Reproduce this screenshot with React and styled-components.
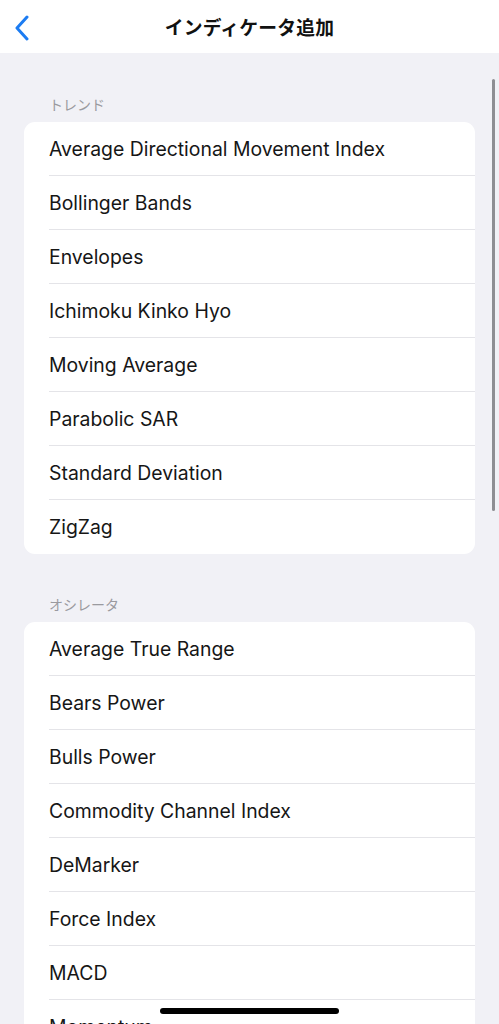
import styled, { createGlobalStyle } from "styled-components";

const GlobalStyle = createGlobalStyle`
  html, body {
    margin: 0;
    padding: 0;
    height: 100%;
    overflow: hidden;
    background: #f1f1f6;
  }
  body {
    font-family: Inter, "Noto Sans", "Noto Sans CJK JP", sans-serif;
    -webkit-font-smoothing: antialiased;
  }
`;

const sections = [
    {
        title: "トレンド",
        items: [
            "Average Directional Movement Index",
            "Bollinger Bands",
            "Envelopes",
            "Ichimoku Kinko Hyo",
            "Moving Average",
            "Parabolic SAR",
            "Standard Deviation",
            "ZigZag",
        ],
    },
    {
        title: "オシレータ",
        items: [
            "Average True Range",
            "Bears Power",
            "Bulls Power",
            "Commodity Channel Index",
            "DeMarker",
            "Force Index",
            "MACD",
            "Momentum",
        ],
    },
];

const App = () => {
    return (
        <Screen>
            <GlobalStyle />
            <Header>
                <BackButton aria-label="戻る">
                    <svg width="16" height="26" viewBox="0 0 16 26" fill="none">
                        <path
                            d="M13 2 L3 13 L13 24"
                            stroke="#1c7cf2"
                            strokeWidth="3"
                            strokeLinecap="round"
                            strokeLinejoin="round"
                        />
                    </svg>
                </BackButton>
                <Title>インディケータ追加</Title>
            </Header>
            <Content>
                {sections.map(section => (
                    <Section key={section.title}>
                        <SectionLabel>{section.title}</SectionLabel>
                        <Card>
                            {section.items.map(item => (
                                <Row key={item}>
                                    <RowText>{item}</RowText>
                                </Row>
                            ))}
                        </Card>
                    </Section>
                ))}
            </Content>
            <ScrollThumb />
            <HomeIndicator />
        </Screen>
    );
};

export default App;

const Screen = styled.div`
position: relative;
width: 499px;
height: 1024px;
overflow: hidden;
background: #f1f1f6;
`;

const Header = styled.header`
position: relative;
display: flex;
align-items: center;
justify-content: center;
height: 53px;
background: #ffffff;
`;

const BackButton = styled.button`
position: absolute;
left: 14px;
top: 15px;
padding: 0;
border: none;
background: none;
display: flex;
`;

const Title = styled.h1`
margin: 0;
font-family: "Noto Sans CJK JP", sans-serif;
font-size: 18.8px;
font-weight: 700;
color: #111111;
letter-spacing: 0.2px;
`;

const Content = styled.main`
display: flex;
flex-direction: column;
gap: 39px;
padding: 40px 24px 0 24px;
`;

const Section = styled.section`
display: flex;
flex-direction: column;
`;

const SectionLabel = styled.div`
padding-left: 25px;
height: 29px;
font-family: "Noto Sans CJK JP", sans-serif;
font-size: 14px;
color: #9a9a9f;
line-height: 22px;
`;

const Card = styled.div`
background: #ffffff;
border-radius: 11px;
overflow: hidden;
`;

const Row = styled.div`
display: flex;
align-items: center;
height: 54px;
margin-left: 25px;
border-bottom: 1px solid #e4e4e8;
box-sizing: border-box;
&:last-child {
    border-bottom: none;
}
`;

const RowText = styled.span`
font-family: Inter, "Noto Sans", sans-serif;
font-size: 19.4px;
color: #161616;
letter-spacing: 0;
`;

const ScrollThumb = styled.div`
position: absolute;
right: 4px;
top: 79px;
width: 3px;
height: 432px;
border-radius: 2px;
background: #8e8e93;
`;

const HomeIndicator = styled.div`
position: absolute;
left: 160px;
bottom: 10px;
width: 179px;
height: 6px;
border-radius: 3px;
background: #000000;
`;
